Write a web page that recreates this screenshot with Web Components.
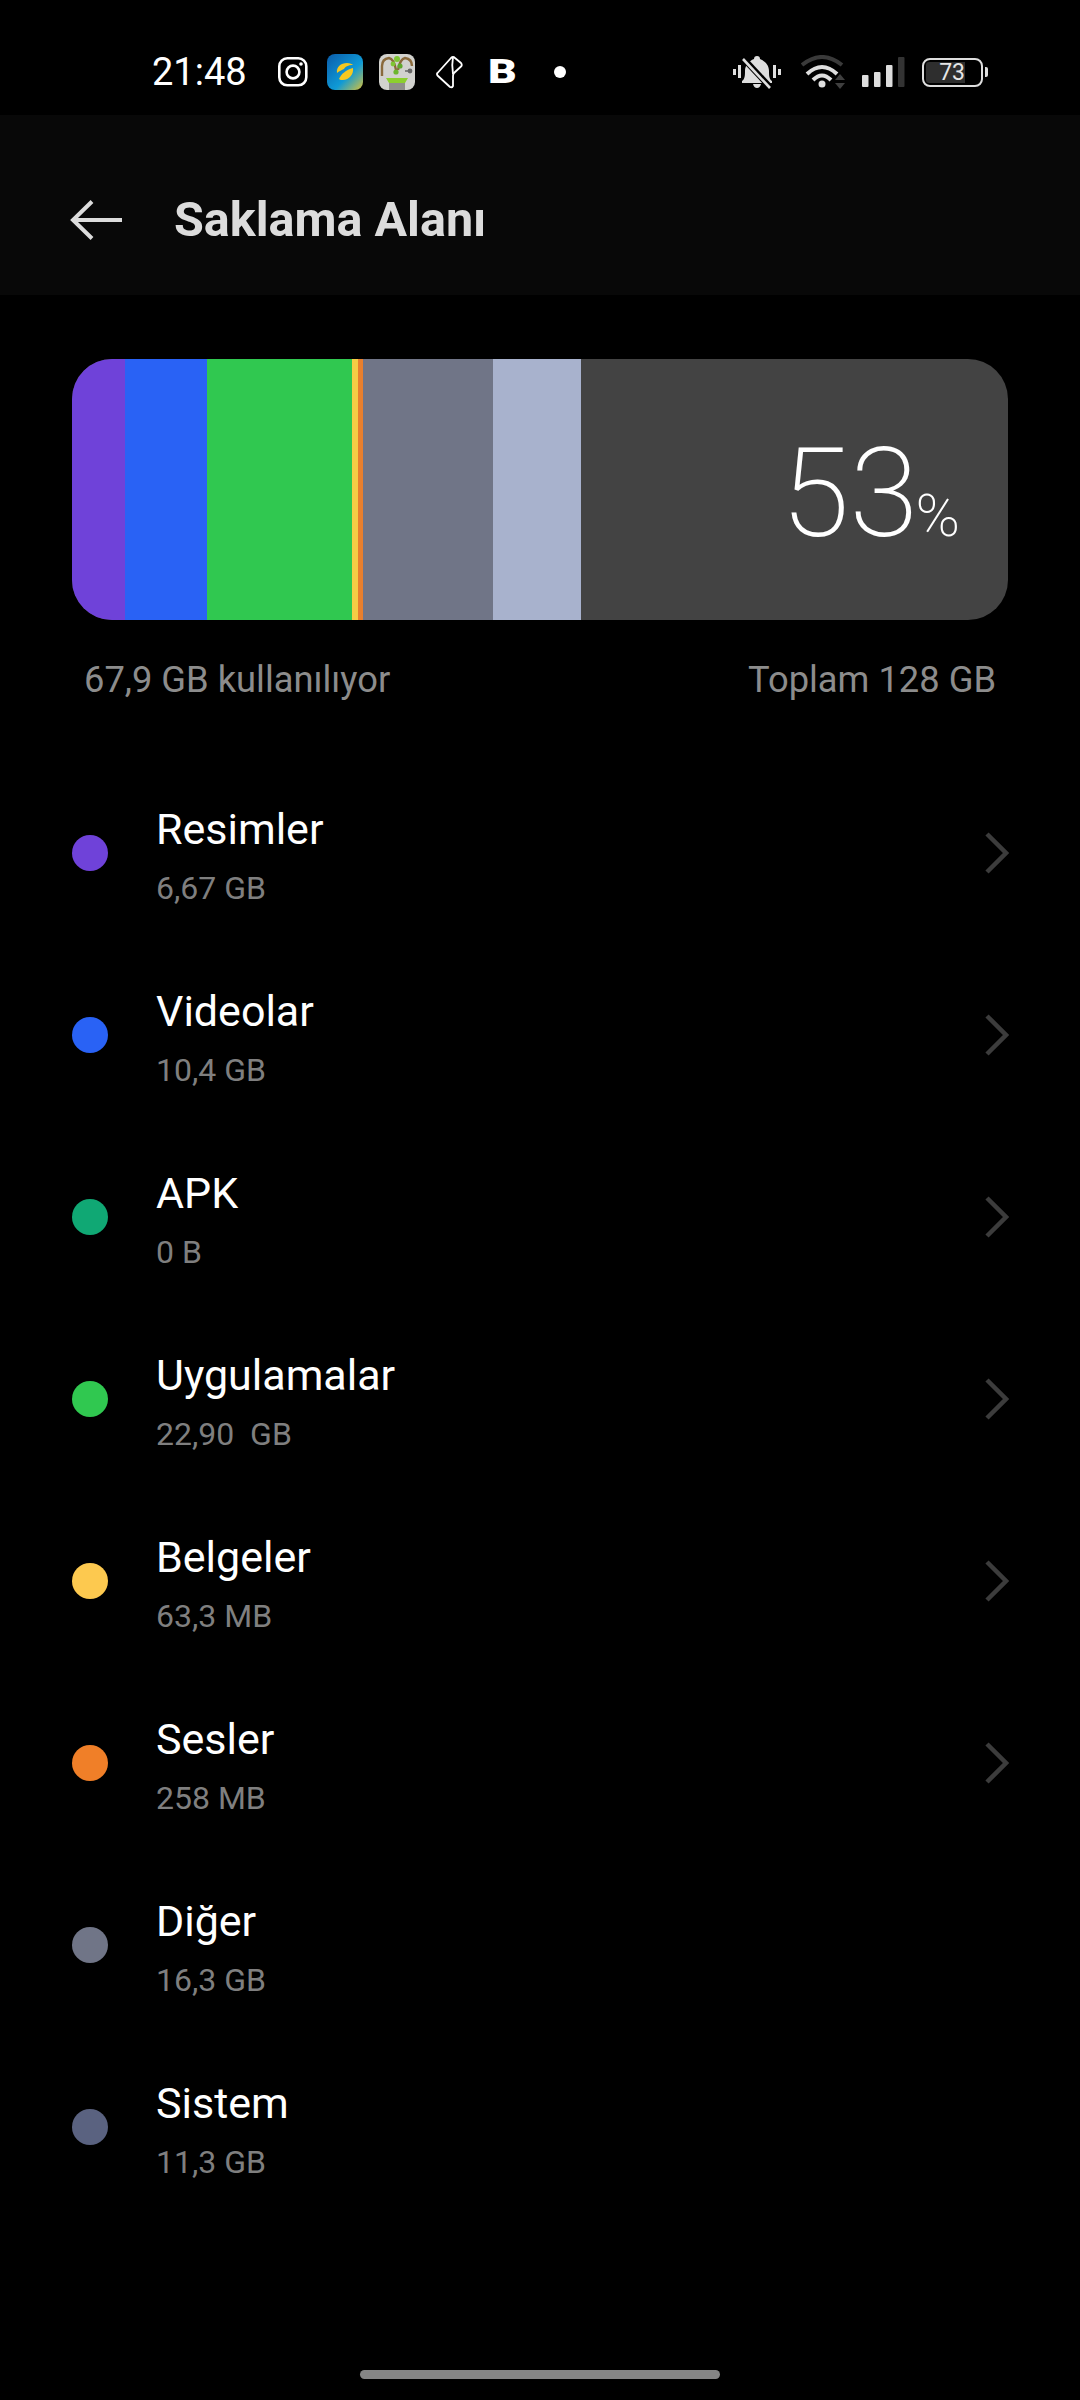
<!DOCTYPE html>
<html lang="tr">
<head>
<meta charset="utf-8">
<title>Saklama Alanı</title>
<style>
    html, body { margin: 0; background: #000; }
    body { width: 1080px; height: 2400px; overflow: hidden; font-family: Roboto, "Noto Sans", sans-serif; }
</style>
</head>
<body>
<storage-page></storage-page>

<script>
class StatusBar extends HTMLElement {
    constructor() {
        super();
        this.attachShadow({ mode: "open" });
    }

    connectedCallback() {
        this.shadowRoot.innerHTML = `
            <style>
                :host {
                    display: flex;
                    align-items: center;
                    height: 115px;
                    padding: 29px 0 0 152px;
                    box-sizing: border-box;
                    color: #fff;
                }
                .time { font-size: 38px; line-height: 86px; width: 126px; }
                .b {
                    margin-left: 24px;
                    width: 25px;
                    font: 900 33px/36px Roboto, sans-serif;
                    transform: scaleX(1.35);
                    transform-origin: left center;
                }
                svg { display: block; flex: none; }
            </style>
            <span class="time">21:48</span>
            <svg width="30" height="30" viewBox="0 0 30 30" fill="none" stroke="#fff" stroke-width="2.6">
                <rect x="1.3" y="1.3" width="27" height="27" rx="8"/>
                <circle cx="15" cy="15" r="6.4"/>
                <circle cx="23" cy="7" r="1.8" fill="#fff" stroke="none"/>
            </svg>
            <svg style="margin-left:19px" width="36" height="36" viewBox="0 0 36 36">
                <defs><linearGradient id="tc" x1="0.1" y1="0.1" x2="1" y2="1">
                    <stop offset="0" stop-color="#0b66b2"/><stop offset="0.55" stop-color="#0f9ad6"/><stop offset="1" stop-color="#d9c23a"/>
                </linearGradient></defs>
                <rect width="36" height="36" rx="8" fill="url(#tc)"/>
                <path d="M10 19C9 13 14 9 20 9c3 0 5 1 6 2-5 0-8 2-9 4-2 1-5 2-7 4z" fill="#f6c820"/>
                <path d="M12 25c2-5 7-9 14-11 1 6-4 12-10 12-2 0-3 0-4-1z" fill="#f6c820"/>
            </svg>
            <svg style="margin-left:16px" width="36" height="36" viewBox="0 0 36 36">
                <rect width="36" height="36" rx="8" fill="#d2d2ce"/>
                <path d="M3 22V12q0-7 7-8 5 1 7 12M33 12q0-7-7-8-5 1-7 12" fill="none" stroke="#8a6a3c" stroke-width="2.4"/>
                <circle cx="18" cy="5" r="3" fill="#7fc535"/><circle cx="14" cy="10" r="2.4" fill="#7fc535"/><circle cx="21" cy="12" r="2.6" fill="#5fa82c"/><circle cx="17" cy="18" r="2.6" fill="#6cb62e"/>
                <path d="M26 17h5" stroke="#666" stroke-width="1.5"/><circle cx="31" cy="17" r="2.4" fill="#666"/>
                <path d="M7 24h22l-3 5H10z" fill="#8ccf2e"/>
                <rect x="10" y="29" width="16" height="7" fill="#8f8f8a"/>
            </svg>
            <svg style="margin-left:21px" width="28" height="33" viewBox="0 0 28 33" fill="none" stroke="#fff" stroke-width="1.8" stroke-linejoin="round">
                <path d="M1.500 17 15 2q2-2 4 0l6 5q1.500 2 0 3.500l-7 6.500q-1 1-1 3v10q-1 2-3 1L1.500 19.500q-1-1.500 0-2.500z"/>
                <path d="M17 1q-1.500 8 0 17"/>
            </svg>
            <span class="b">B</span>
            <svg style="margin-left:41px" width="12" height="12" viewBox="0 0 12 12"><circle cx="6" cy="6" r="6" fill="#fff"/></svg>

            <svg style="margin-left:167px" width="48" height="34" viewBox="0 0 48 34" fill="#dedede">
                <rect x="0" y="14" width="3" height="6"/><rect x="5" y="10" width="3" height="13"/>
                <rect x="40" y="10" width="3" height="13"/><rect x="45" y="14" width="3" height="6"/>
                <path d="M9 26c3-2 3-6 3-10 0-6 4-10 9-12 0-2 1-3 3-3s3 1 3 3c5 2 9 6 9 12 0 4 0 8 3 10v2H9z"/>
                <path d="M20 29h8q-1 4-4 4t-4-4z"/>
                <path d="M9 2 37 32" stroke="#000" stroke-width="6"/>
                <path d="M10 4 37 33" stroke="#dedede" stroke-width="2.6"/>
            </svg>
            <svg style="margin-left:20px" width="45" height="34" viewBox="0 0 45 34" fill="none">
                <path d="M1 10Q21-6 41 10" stroke="#3a3a3a" stroke-width="4"/>
                <path d="M6 19Q21 5 36 19" stroke="#dedede" stroke-width="4"/>
                <path d="M12 25Q21 16 30 25" stroke="#dedede" stroke-width="4"/>
                <circle cx="21" cy="29" r="3.5" fill="#dedede"/>
                <path d="M34 25h10l-5-6z" fill="#3f3f3f"/><path d="M34 28h10l-5 6z" fill="#3f3f3f"/>
            </svg>
            <svg style="margin-left:16px" width="43" height="30" viewBox="0 0 43 30">
                <rect x="0" y="18" width="6.500" height="12" rx="1" fill="#dedede"/>
                <rect x="12" y="15" width="6.500" height="15" rx="1" fill="#dedede"/>
                <rect x="24" y="8" width="6.500" height="22" rx="1" fill="#dedede"/>
                <rect x="36" y="0" width="6.500" height="30" rx="1" fill="#333"/>
            </svg>
            <battery-indicator level="73" style="margin-left:17px"></battery-indicator>
        `;
    }
}

class BatteryIndicator extends HTMLElement {
    constructor() {
        super();
        this.attachShadow({ mode: "open" });
    }

    connectedCallback() {
        this.shadowRoot.innerHTML = `
            <style>
                :host { display: flex; align-items: center; }
                .body {
                    width: 61px;
                    height: 29px;
                    box-sizing: border-box;
                    border: 2px solid #dedede;
                    border-radius: 8px;
                    padding: 2px;
                    display: flex;
                }
                .fill {
                    width: 39px;
                    background: #2e2e2e;
                    border-radius: 3px 0 0 3px;
                    color: #e6e6e6;
                    font: 400 23px/21px Roboto, sans-serif;
                    text-align: right;
                }
                .nub { width: 3px; height: 10px; margin-left: 2px; background: #dedede; border-radius: 0 2px 2px 0; }
            </style>
            <div class="body"><div class="fill">${this.getAttribute("level")}</div></div>
            <div class="nub"></div>
        `;
    }
}

class AppHeader extends HTMLElement {
    constructor() {
        super();
        this.attachShadow({ mode: "open" });
    }

    connectedCallback() {
        this.shadowRoot.innerHTML = `
            <style>
                :host {
                    display: flex;
                    align-items: center;
                    height: 180px;
                    background: #080808;
                    padding: 30px 0 0 70px;
                    box-sizing: border-box;
                }
                svg { display: block; margin-right: 52px; }
                h1 { margin: 0; font: 700 48.5px/56px Roboto, sans-serif; color: #dcdcdc; }
            </style>
            <svg width="52" height="40" viewBox="0 0 52 40" fill="none" stroke="#dcdcdc" stroke-width="4">
                <path d="M52 20H3M22 1.500 3 20l19 18.500"/>
            </svg>
            <h1><slot></slot></h1>
        `;
    }
}

class StorageBar extends HTMLElement {
    constructor() {
        super();
        this.attachShadow({ mode: "open" });
    }

    connectedCallback() {
        // segment widths in px, read off the reference
        const segments = [
            ["#6f42d9", 53], ["#2962f5", 82], ["#30c850", 145], ["#f5cc45", 6],
            ["#e87f2e", 5], ["#707587", 130], ["#a8b2cd", 88]
        ];
        this.shadowRoot.innerHTML = `
            <style>
                :host { display: block; padding: 64px 72px 0; }
                .bar {
                    display: flex;
                    height: 261px;
                    border-radius: 40px;
                    overflow: hidden;
                    background: #434343;
                }
                .seg { flex: none; }
                .percent {
                    margin-left: auto;
                    padding: 72px 48px 0 0;
                    color: #fff;
                    font: 200 125px/125px Roboto, sans-serif;
                    height: fit-content;
                }
                .percent small { font-size: 60px; margin-left: -3px; }
                .labels {
                    display: flex;
                    justify-content: space-between;
                    padding: 40px 12px 0 12px;
                    color: #8c8c8c;
                    font: 400 36.3px/40px Roboto, sans-serif;
                }
            </style>
            <div class="bar">
                ${segments.map(s => `<div class="seg" style="background:${s[0]};width:${s[1]}px"></div>`).join("")}
                <div class="percent">${this.getAttribute("percent")}<small>%</small></div>
            </div>
            <div class="labels">
                <span>${this.getAttribute("used")}</span>
                <span>${this.getAttribute("total")}</span>
            </div>
        `;
    }
}

class StorageRow extends HTMLElement {
    constructor() {
        super();
        this.attachShadow({ mode: "open" });
    }

    connectedCallback() {
        const arrow = this.hasAttribute("arrow") ? `
            <svg width="24" height="42" viewBox="0 0 24 42" fill="none" stroke="#3c3c3c" stroke-width="4.500">
                <path d="M2 2l19 19L2 40"/>
            </svg>` : "";
        this.shadowRoot.innerHTML = `
            <style>
                :host {
                    display: flex;
                    align-items: center;
                    height: 182px;
                    padding: 0 72px;
                }
                .dot { width: 36px; height: 36px; border-radius: 50%; margin-right: 48px; flex: none; }
                .text { flex: 1; margin-top: 4px; }
                .name { color: #fff; font: 400 43px/48px Roboto, sans-serif; white-space: pre; }
                .size { color: #7f7f7f; font: 400 32px/36px Roboto, sans-serif; margin-top: 17px; white-space: pre; }
                svg { display: block; flex: none; margin-right: -1px; }
            </style>
            <div class="dot" style="background:${this.getAttribute("color")}"></div>
            <div class="text">
                <div class="name">${this.getAttribute("name")}</div>
                <div class="size">${this.getAttribute("size")}</div>
            </div>
            ${arrow}
        `;
    }
}

class HomeIndicator extends HTMLElement {
    constructor() {
        super();
        this.attachShadow({ mode: "open" });
    }

    connectedCallback() {
        this.shadowRoot.innerHTML = `
            <style>
                :host { display: block; width: 360px; height: 9px; background: #858585; border-radius: 5px; }
            </style>
        `;
    }
}

class StoragePage extends HTMLElement {
    constructor() {
        super();
        this.attachShadow({ mode: "open" });
    }

    connectedCallback() {
        const rows = [
            ["Resimler", "6,67 GB", "#6f42d9", true],
            ["Videolar", "10,4 GB", "#2962f5", true],
            ["APK", "0 B", "#10a874", true],
            ["Uygulamalar", "22,90  GB", "#30c850", true],
            ["Belgeler", "63,3 MB", "#fdc94f", true],
            ["Sesler", "258 MB", "#f07f28", true],
            ["Diğer", "16,3 GB", "#707587", false],
            ["Sistem", "11,3 GB", "#5a6280", false]
        ];
        this.shadowRoot.innerHTML = `
            <style>
                :host { display: flex; flex-direction: column; width: 1080px; height: 2400px; background: #000; }
                .list { padding-top: 62px; }
                home-indicator { margin: auto 0 21px 360px; }
            </style>
            <status-bar></status-bar>
            <app-header>Saklama Alanı</app-header>
            <storage-bar percent="53" used="67,9 GB kullanılıyor" total="Toplam 128 GB"></storage-bar>
            <div class="list">
                ${rows.map(r => `<storage-row name="${r[0]}" size="${r[1]}" color="${r[2]}" ${r[3] ? "arrow" : ""}></storage-row>`).join("")}
            </div>
            <home-indicator></home-indicator>
        `;
    }
}

customElements.define("battery-indicator", BatteryIndicator);
customElements.define("status-bar", StatusBar);
customElements.define("app-header", AppHeader);
customElements.define("storage-bar", StorageBar);
customElements.define("storage-row", StorageRow);
customElements.define("home-indicator", HomeIndicator);
customElements.define("storage-page", StoragePage);
</script>
</body>
</html>
